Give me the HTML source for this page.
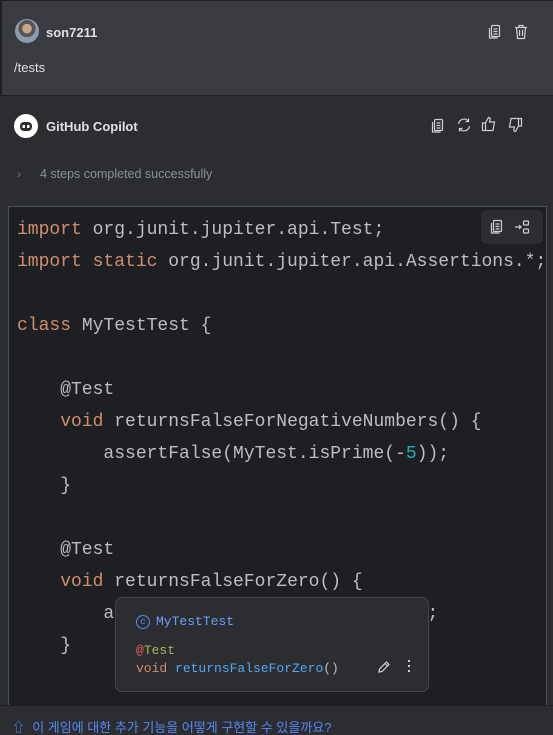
<!DOCTYPE html>
<html><head><meta charset="utf-8"><style>
*{margin:0;padding:0;box-sizing:border-box}
html,body{height:728px}
body{width:553px;overflow:hidden;background:#2b2d30;font-family:"Liberation Sans","Noto Sans CJK KR",sans-serif;position:relative;color:#dfe1e5}
.top{position:absolute;left:0;top:0;width:553px;height:96px;background:#393b40;border-top:1px solid #1e1f22;border-left:2px solid #1e1f22;border-bottom:1px solid #1e1f22}
.name{position:absolute;font-weight:bold;font-size:13px;color:#dfe1e5}
.ic{position:absolute}
.code{position:absolute;left:8px;top:206px;width:539px;height:500px;background:#1e1f22;border:1px solid #4e5157;border-bottom:none;overflow:hidden;font-family:"Liberation Mono",monospace;font-size:18px;line-height:32px;color:#bcbec4;white-space:pre;padding:7px 0 0 8px}
.k{color:#cf8e6d}.n{color:#2aacb8}
.pop{position:absolute;left:115px;top:597px;width:314px;height:95px;background:#2b2d30;border:1px solid #43454a;border-radius:7px;font-family:"Liberation Mono",monospace;font-size:13px}
</style></head><body>
<div class="top">
 <div style="position:absolute;left:13px;top:18px;width:24px;height:24px;border-radius:50%;background:radial-gradient(circle at 50% 40%,#c9a88a 0 25%,#555 26% 45%,#8a9bb0 46%);"></div>
 <div class="name" style="left:44px;top:24px">son7211</div>
 <div style="position:absolute;left:12px;top:59px;font-size:13px;color:#dfe1e5">/tests</div>
 <svg class="ic" style="left:486px;top:23px" width="14" height="16" viewBox="0 0 14 16" fill="none" stroke="#ced0d6" stroke-width="1.2"><rect x="3.5" y="1.5" width="8" height="11" rx="1"/><path d="M1.5 4v10h8M5.5 5h4M5.5 7.5h4M5.5 10h4"/></svg>
 <svg class="ic" style="left:512px;top:23px" width="14" height="16" viewBox="0 0 14 16" fill="none" stroke="#ced0d6" stroke-width="1.2"><path d="M1 3.5h12M5 3.5V1.5h4v2M2.5 3.5l1 11h7l1-11M5.5 6v6M8.5 6v6"/></svg>
</div>
<div style="position:absolute;left:14px;top:114px;width:24px;height:24px;border-radius:50%;background:#fff"></div>
<svg class="ic" style="left:17px;top:117px" width="18" height="18" viewBox="0 0 18 18"><rect x="3" y="5" width="12" height="9" rx="4" fill="#2b2d30"/><rect x="5.5" y="8" width="2.5" height="3" fill="#fff"/><rect x="10" y="8" width="2.5" height="3" fill="#fff"/></svg>
<div class="name" style="left:46px;top:119px">GitHub Copilot</div>
<svg class="ic" style="left:431px;top:118px" width="14" height="16" viewBox="0 0 14 16" fill="none" stroke="#ced0d6" stroke-width="1.2"><rect x="3.5" y="1.5" width="8" height="11" rx="1"/><path d="M1.5 4v10h8M5.5 5h4M5.5 7.5h4M5.5 10h4"/></svg>
<svg class="ic" style="left:456px;top:117px" width="16" height="16" viewBox="0 0 16 16" fill="none" stroke="#ced0d6" stroke-width="1.2"><path d="M2.5 7a5.5 5.5 0 0 1 10-2.5M13.5 9a5.5 5.5 0 0 1-10 2.5M12.5 1.5v3h-3M3.5 14.5v-3h3"/></svg>
<svg class="ic" style="left:481px;top:116px" width="16" height="16" viewBox="0 0 16 16" fill="none" stroke="#ced0d6" stroke-width="1.2"><path d="M1.5 7h3v7.5h-3zM4.5 7l3-5.5c1.5 0 2 1 1.5 2.5L8.5 6h5l-1.5 8.5H4.5"/></svg>
<svg class="ic" style="left:507px;top:117px" width="16" height="16" viewBox="0 0 16 16" fill="none" stroke="#ced0d6" stroke-width="1.2"><path d="M14.5 9h-3V1.5h3zM11.5 9l-3 5.5c-1.5 0-2-1-1.5-2.5L7.5 10h-5L4 1.5h7.5"/></svg>
<div style="position:absolute;left:17px;top:167px;font-size:12px;color:#6f737a">›</div>
<div style="position:absolute;left:40px;top:167px;font-size:12.5px;color:#8c8f95">4 steps completed successfully</div>
<div class="code"><span class="k">import</span> org.junit.jupiter.api.Test;
<span class="k">import static</span> org.junit.jupiter.api.Assertions.*;

<span class="k">class</span> MyTestTest {

    @Test
    <span class="k">void</span> returnsFalseForNegativeNumbers() {
        assertFalse(MyTest.isPrime(-<span class="n">5</span>));
    }

    @Test
    <span class="k">void</span> returnsFalseForZero() {
        assertFalse(MyTest.isPrime(<span class="n">0</span>));
    }
<div style="position:absolute;left:472px;top:3px;width:62px;height:34px;background:#2b2d30;border-radius:6px"></div><svg style="position:absolute;left:481px;top:12px" width="14" height="16" viewBox="0 0 14 16" fill="none" stroke="#ced0d6" stroke-width="1.2"><rect x="3.5" y="1.5" width="8" height="11" rx="1"/><path d="M1.5 4v10h8M5.5 5h4M5.5 7.5h4M5.5 10h4"/></svg><svg style="position:absolute;left:505px;top:12px" width="16" height="16" viewBox="0 0 16 16" fill="none" stroke="#ced0d6" stroke-width="1.2"><path d="M1 8h6M5 6l2 2-2 2"/><rect x="9.5" y="2" width="5" height="4" rx="1"/><rect x="9.5" y="10" width="5" height="4" rx="1"/></svg></div>
<div class="pop">
 <div style="position:absolute;left:20px;top:17px;width:14px;height:14px;border:1.3px solid #548af7;border-radius:50%;color:#548af7;font-size:9px;line-height:12px;text-align:center">c</div>
 <div style="position:absolute;left:40px;top:16px;color:#6f9eff">MyTestTest</div>
 <div style="position:absolute;left:20px;top:45px;color:#b3ae60"><span style="color:#e55f5f">@</span>Test</div>
 <div style="position:absolute;left:20px;top:63px;color:#cf8e6d">void <span style="color:#56a8f5">returnsFalseForZero</span><span style="color:#bcbec4">()</span></div>
 <svg style="position:absolute;left:261px;top:62px" width="14" height="14" viewBox="0 0 14 14" fill="none" stroke="#ced0d6" stroke-width="1.2"><path d="M2 12l.5-3 7-7 2.5 2.5-7 7zM8 3.5l2.5 2.5"/></svg>
 <div style="position:absolute;left:292px;top:62px;width:2px;height:2px;background:#ced0d6;box-shadow:0 5px #ced0d6,0 10px #ced0d6"></div>
</div>
<div style="position:absolute;left:0;top:705px;width:553px;height:23px;background:#2b2d30;border-top:1px solid #1e1f22"></div>
<div style="position:absolute;left:12px;top:720px;font-size:13px;line-height:15px;color:#548af7;white-space:nowrap">⇧ &nbsp;이 게임에 대한 추가 기능을 어떻게 구현할 수 있을까요?</div>
</body></html>
